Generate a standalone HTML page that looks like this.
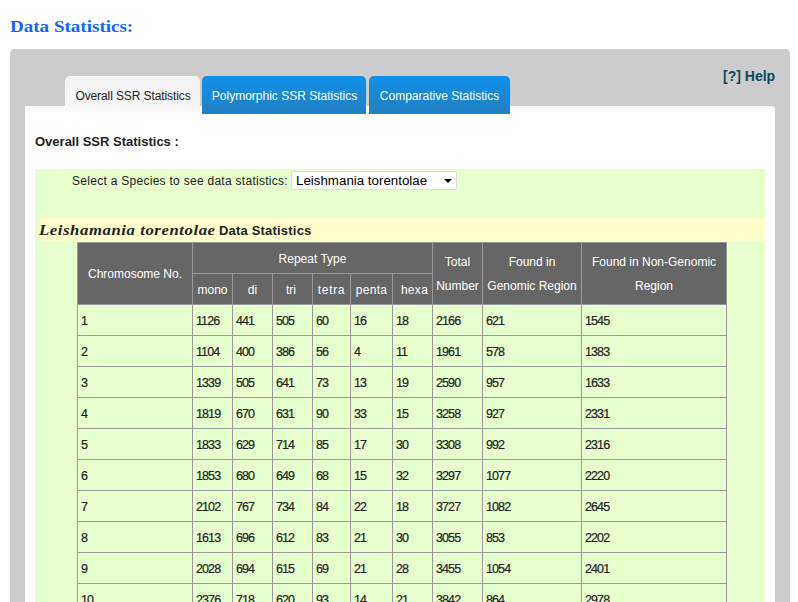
<!DOCTYPE html>
<html>
<head>
<meta charset="utf-8">
<title>Data Statistics</title>
<style>
html,body{margin:0;padding:0;background:#fff;}
body{width:798px;height:602px;overflow:hidden;position:relative;font-family:"Liberation Sans",sans-serif;font-size:12px;color:#222;}
#h1{position:absolute;left:9.7px;top:16px;font-family:"Liberation Serif",serif;font-weight:bold;font-size:17px;color:#1265fc;white-space:nowrap;line-height:22px;transform-origin:0 0;transform:scaleX(1.12);}
#gray{position:absolute;left:10px;top:49px;width:780px;height:560px;background:#cccccc;border-radius:5px 5px 0 0;}
#help{position:absolute;left:723px;top:67px;font-weight:bold;font-size:14px;color:#0d4a5c;white-space:nowrap;line-height:18px;}
.tab{position:absolute;top:76px;height:38px;border-radius:5px 5px 0 0;font-size:12px;line-height:40px;text-align:center;white-space:nowrap;}
#t1{left:65px;width:135px;letter-spacing:-0.1px;text-indent:1px;background:linear-gradient(#fafafa 0,#f3f3f3 4%,#f5f5f5 72%,#ffffff 98%);color:#222;}
#t2{left:202px;width:164px;text-indent:1px;background:linear-gradient(#0f90ea,#2380c1);color:#fff;}
#t3{left:369px;width:141px;background:linear-gradient(#0f90ea,#2380c1);color:#fff;}
#white{position:absolute;left:25px;top:106px;width:750px;height:500px;background:#fff;border-radius:0 4px 0 0;}
#sub{position:absolute;left:35px;top:133px;font-weight:bold;font-size:13px;color:#222;white-space:nowrap;line-height:18px;}
#green{position:absolute;left:35px;top:169px;width:730px;height:440px;background:#e6ffcc;}
#lbl{position:absolute;left:72px;top:172px;font-size:12px;letter-spacing:0.28px;color:#222;white-space:nowrap;line-height:18px;}
#sel{position:absolute;left:291px;top:171px;width:160px;height:17px;background:#fff;border:1px solid #ddd;border-radius:2px;font-size:13.33px;line-height:17px;color:#000;white-space:nowrap;padding-left:4px;box-sizing:content-box;}
#sel i{position:absolute;right:4px;top:7px;width:0;height:0;border-left:4px solid transparent;border-right:4px solid transparent;border-top:4px solid #000;}
#yellow{position:absolute;left:40px;top:218px;width:725px;height:24px;background:#ffffcc;}
#ttl{position:absolute;left:39px;top:220px;white-space:nowrap;line-height:20px;font-weight:bold;font-size:13px;color:#222;letter-spacing:0.2px;}
#ttl em{display:inline-block;font-family:"Liberation Serif",serif;font-style:italic;font-weight:bold;font-size:15px;letter-spacing:0.5px;transform-origin:0 50%;transform:scaleX(1.117);margin-right:18px;}
table{position:absolute;left:77px;top:242px;border-collapse:collapse;table-layout:fixed;width:649px;}
th{background:#666666;color:#fff;font-weight:normal;font-size:12px;border:1px solid #999;padding:1px 0 0 0;text-align:center;line-height:24px;}
td{border:1px solid #999;height:28px;padding:2px 0 0 3px;letter-spacing:-0.9px;font-size:12.5px;color:#222;text-align:left;-webkit-text-stroke:0.2px #222;}
</style>
</head>
<body>
<div id="h1">Data Statistics:</div>
<div id="gray"></div>
<div id="help">[?] Help</div>
<div id="white"></div>
<div class="tab" id="t1">Overall SSR Statistics</div>
<div class="tab" id="t2">Polymorphic SSR Statistics</div>
<div class="tab" id="t3">Comparative Statistics</div>
<div id="sub">Overall SSR Statistics :</div>
<div id="green"></div>
<div id="lbl">Select a Species to see data statistics:</div>
<div id="sel">Leishmania torentolae<i></i></div>
<div id="yellow"></div>
<div id="ttl"><em>Leishamania torentolae</em> Data Statistics</div>
<table>
<colgroup><col style="width:115px"><col style="width:40px"><col style="width:40px"><col style="width:40px"><col style="width:38px"><col style="width:42px"><col style="width:40px"><col style="width:50px"><col style="width:99px"><col style="width:145px"></colgroup>
<tr style="height:31px"><th rowspan="2">Chromosome No.</th><th colspan="6">Repeat Type</th><th rowspan="2">Total<br>Number</th><th rowspan="2">Found in<br>Genomic Region</th><th rowspan="2">Found in Non-Genomic<br>Region</th></tr>
<tr style="height:31px"><th>mono</th><th>di</th><th style="padding-right:3px">tri</th><th style="letter-spacing:.7px">tetra</th><th style="letter-spacing:.3px">penta</th><th style="padding-left:4px;letter-spacing:.3px">hexa</th></tr>
<tr><td>1</td><td>1126</td><td>441</td><td>505</td><td>60</td><td>16</td><td>18</td><td>2166</td><td>621</td><td>1545</td></tr>
<tr><td>2</td><td>1104</td><td>400</td><td>386</td><td>56</td><td>4</td><td>11</td><td>1961</td><td>578</td><td>1383</td></tr>
<tr><td>3</td><td>1339</td><td>505</td><td>641</td><td>73</td><td>13</td><td>19</td><td>2590</td><td>957</td><td>1633</td></tr>
<tr><td>4</td><td>1819</td><td>670</td><td>631</td><td>90</td><td>33</td><td>15</td><td>3258</td><td>927</td><td>2331</td></tr>
<tr><td>5</td><td>1833</td><td>629</td><td>714</td><td>85</td><td>17</td><td>30</td><td>3308</td><td>992</td><td>2316</td></tr>
<tr><td>6</td><td>1853</td><td>680</td><td>649</td><td>68</td><td>15</td><td>32</td><td>3297</td><td>1077</td><td>2220</td></tr>
<tr><td>7</td><td>2102</td><td>767</td><td>734</td><td>84</td><td>22</td><td>18</td><td>3727</td><td>1082</td><td>2645</td></tr>
<tr><td>8</td><td>1613</td><td>696</td><td>612</td><td>83</td><td>21</td><td>30</td><td>3055</td><td>853</td><td>2202</td></tr>
<tr><td>9</td><td>2028</td><td>694</td><td>615</td><td>69</td><td>21</td><td>28</td><td>3455</td><td>1054</td><td>2401</td></tr>
<tr><td>10</td><td>2376</td><td>718</td><td>620</td><td>93</td><td>14</td><td>21</td><td>3842</td><td>864</td><td>2978</td></tr>
<tr><td>11</td><td>2290</td><td>733</td><td>640</td><td>88</td><td>19</td><td>25</td><td>3795</td><td>901</td><td>2894</td></tr>
</table>
</body>
</html>
